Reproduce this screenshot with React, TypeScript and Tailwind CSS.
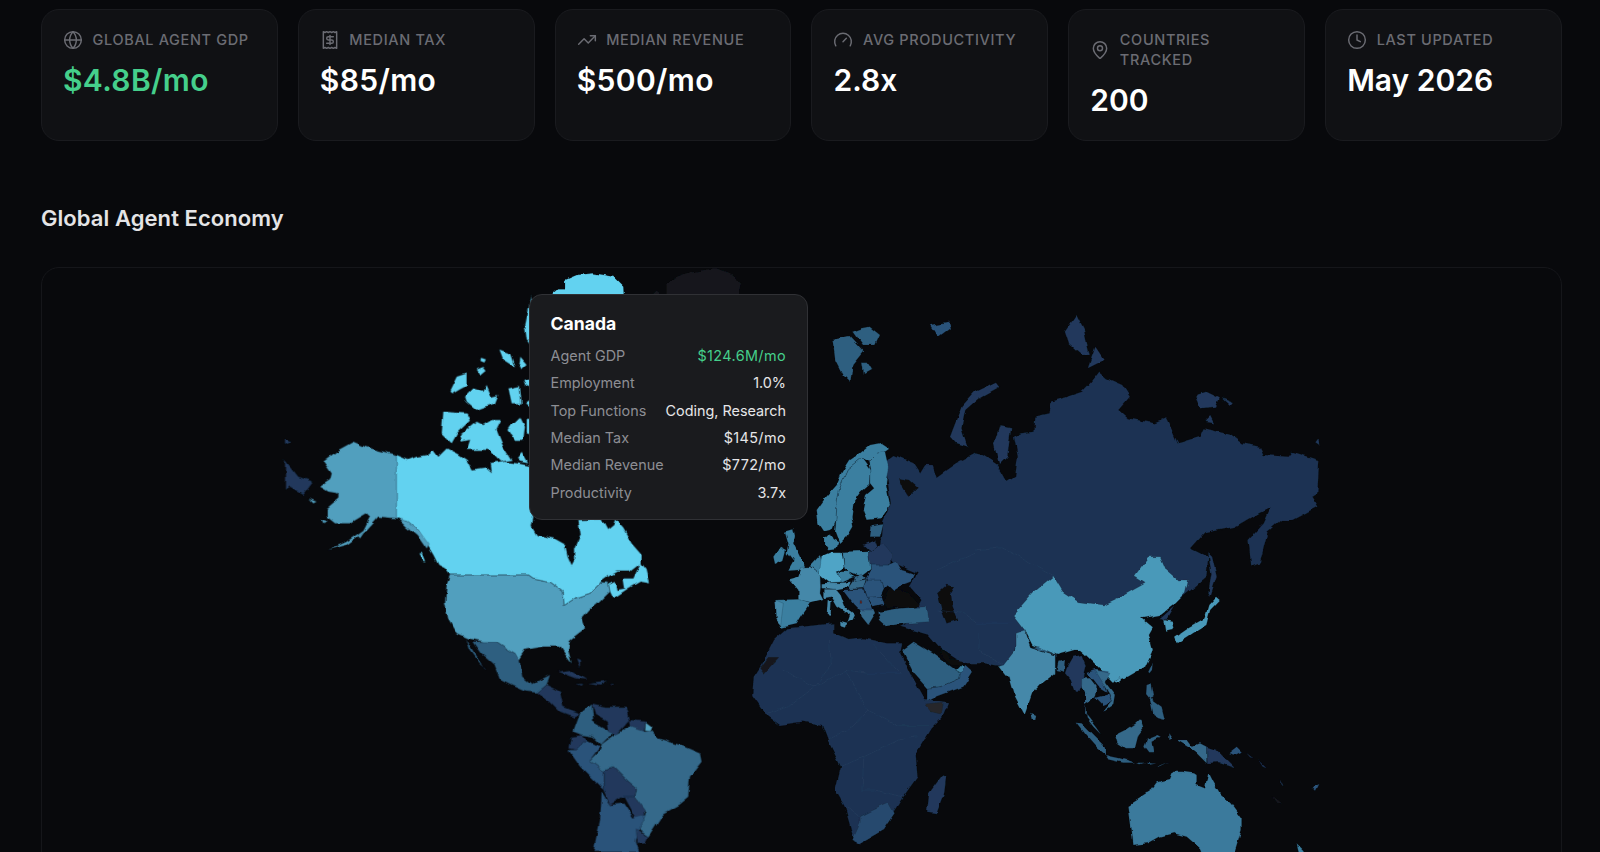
import { Globe, Receipt, TrendingUp, Gauge, MapPin, Clock } from "lucide-react";
import type { ReactNode } from "react";

const font = { fontFamily: "Inter, 'Liberation Sans', sans-serif" };

function Card({ icon, label, value, green, wide }: { icon: ReactNode; label: ReactNode; value: string; green?: boolean; wide?: boolean }) {
  return (
    <div className="h-[132px] rounded-[18px] border border-[#1a1b1f] bg-[#101114] px-[21px] pt-[20px]">
      <div className="flex items-center gap-[9.5px] text-[#6b6c73]">
        {icon}
        <span className="text-[14.5px] leading-[20px] tracking-[0.045em] uppercase font-medium">{label}</span>
      </div>
      <div className={`mt-[10px] text-[30px] leading-[40px] font-semibold ${wide ? "tracking-[0.012em]" : ""} ${green ? "text-[#45cf8b]" : "text-white"}`}>{value}</div>
    </div>
  );
}

function Row({ k, v, green, wide }: { k: string; v: string; green?: boolean; wide?: boolean }) {
  return (
    <div className="flex h-[27.4px] items-center justify-between text-[14.4px]">
      <span className="text-[#8d8e94]">{k}</span>
      <span className={`${wide ? "tracking-[0.028em]" : ""} ${green ? "text-[#45cf8b]" : "text-[#e6e6e8]"}`}>{v}</span>
    </div>
  );
}

const C = {
  ca: "#62d2f0",
  us: "#519fbe",
  de: "#4fa4c6",
  cn: "#4a99b9",
  in: "#4488a9",
  eu: "#3a7fa0",
  au: "#3a7a9c",
  br: "#34698a",
  m1: "#2e5f80",
  m2: "#2a537a",
  za: "#274a6e",
  d1: "#21395c",
  d2: "#1c3253",
  no: "#18191d",
  bg: "#08090c",
};

type Poly = [string, string];

function Polys({ x, y, sx = 0.33333, items }: { x: number; y: number; sx?: number; items: Poly[] }) {
  return (
    <g transform={`translate(${x} ${y}) scale(${sx} 0.33333)`}>
      {items.map(([f, p], i) => (
        <polygon key={i} points={p} fill={f} stroke="#101a28" strokeOpacity={0.4} strokeWidth={1.5} strokeLinejoin="round" />
      ))}
    </g>
  );
}

const z3: Poly[] = [
  [C.no, "500,75 520,55 560,40 650,25 690,40 725,70 715,110 500,110"],
  [C.ca, "158,100 175,85 195,85 195,60 230,45 280,40 340,50 370,80 372,110 158,110"],
  [C.no, "460,102 470,92 482,102"],
];

const z4: Poly[] = [
  [C.d1, "45,600 85,650 130,665 100,705 60,680 45,690"],
  [C.d1, "45,535 65,545 45,555"],
  [C.us, "380,585 320,570 285,560 250,545 205,570 160,605 185,640 180,660 150,680 175,695 205,700 205,715 170,745 170,770 195,790 240,790 290,760 300,770 280,810 230,845 175,870 230,855 290,810 325,770 380,775"],
  [C.us, "115,715 140,725 130,730"],
  [C.us, "155,778 170,782 160,790"],
  [C.us, "262,825 282,818 270,835"],
  [C.ca, "380,585 415,600 440,590 470,585 490,570 505,590 530,565 560,580 590,600 605,628 650,622 665,636 662,612 700,605 745,610 790,620 790,775 785,800 800,825 850,835 885,855 893,890 905,918 915,900 915,865 932,825 925,780 995,778 1012,810 1030,795 1035,778 1060,805 1085,850 1115,885 1115,910 1130,930 1140,970 1110,965 1075,985 1030,1015 1020,995 1015,970 990,970 960,1000 915,1015 882,1037 880,995 840,965 790,955 775,945 540,945 525,925 505,915 490,885 475,860 445,810 415,785 380,775"],
  [C.us, "385,775 415,785 445,810 478,855 470,868 440,825 410,800"],
  [C.bg, "990,968 1015,950 1040,935 1080,935 1110,912 1090,955 1060,955 1065,985 1040,990 1035,965 1015,975"],
  [C.ca, "445,880 455,878 466,905 458,902"],
  [C.ca, "538,395 560,350 590,340 590,375 570,385 545,400"],
  [C.ca, "620,325 640,318 650,330 632,345"],
  [C.ca, "630,290 645,295 640,305 628,300"],
  [C.ca, "585,410 610,385 640,395 650,375 665,410 685,405 675,430 620,450 590,425"],
  [C.ca, "688,268 720,280 735,322 700,300"],
  [C.ca, "748,290 770,315 755,328 745,310"],
  [C.ca, "715,385 750,378 755,430 725,430"],
  [C.ca, "760,360 785,352 785,385 765,378"],
  [C.ca, "765,430 785,415 785,445"],
  [C.ca, "520,455 590,460 600,482 565,515 545,550 515,520"],
  [C.ca, "570,525 620,485 640,495 665,480 695,480 680,510 700,560 725,600 690,605 655,570 590,570 600,540 575,545"],
  [C.ca, "725,495 750,470 765,500 760,540 735,540 715,510"],
  [C.ca, "770,480 785,478 785,525 770,520"],
  [C.ca, "740,595 755,575 775,610 750,605"],
  [C.ca, "785,105 765,200 770,240 785,262"],
];

const z5: Poly[] = [
  [C.us, "150,105 385,105 400,115 450,125 490,155 492,197 525,175 570,160 600,130 625,130 630,155 590,195 570,210 548,235 555,265 510,300 505,330 515,370 500,350 480,320 430,320 375,330 355,360 345,340 320,325 290,305 250,305 205,295 170,280 145,240 135,190 140,130"],
  [C.m1, "198,295 225,340 255,385 262,390 240,370 210,330"],
  [C.m1, "220,305 250,305 290,305 320,325 345,340 360,365 367,410 395,432 420,420 450,405 440,435 412,458 375,455 335,437 300,420 280,370 245,340"],
  [C.d1, "412,458 440,435 480,455 490,500 525,515 540,520 520,530 480,515 450,485"],
  [C.d1, "475,395 510,390 560,420 530,415"],
  [C.d1, "565,432 620,425 600,437"],
  [C.d1, "630,433 640,432 640,437"],
  [C.d1, "530,435 550,435 545,440"],
  [C.d1, "528,355 540,360 540,385"],
  [C.m1, "540,520 575,490 580,545 640,580 605,615 580,590 545,585 520,575"],
  [C.d1, "575,490 620,500 680,500 690,540 650,585 625,575 620,545 585,525"],
  [C.d1, "690,540 740,545 735,575 695,580"],
  [C.us, "740,545 760,560 755,575 738,572"],
  [C.d1, "512,590 545,585 560,600 530,630 505,625"],
  [C.m2, "505,630 530,630 560,600 600,620 570,660 610,690 610,750 580,720 540,680"],
  [C.br, "570,660 600,630 605,615 645,585 690,560 735,575 755,572 775,595 840,615 900,640 905,665 870,710 865,770 835,795 790,820 745,890 715,870 740,820 705,770 710,745 680,720 640,680 610,690"],
  [C.d1, "610,690 640,680 680,720 710,745 705,770 670,770 630,795 610,750"],
  [C.d1, "670,770 705,770 735,810 735,840 705,835"],
  [C.m2, "605,755 630,795 670,790 700,835 740,825 715,870 705,905 715,936 580,936 600,840"],
  [C.d1, "705,870 745,890 735,910 710,912"],
];

const z6: Poly[] = [
  [C.m1, "268,120 310,108 348,155 320,195 315,248 295,225 275,180"],
  [C.m1, "320,95 345,85 365,80 392,105 380,135 345,135"],
  [C.m1, "345,185 360,185 372,208 350,222"],
  [C.m2, "525,75 570,65 575,85 545,110"],
  [C.d1, "875,95 905,45 925,90 940,165 920,165 885,130"],
  [C.d1, "955,140 978,180 935,205"],
  [C.d1, "575,410 605,320 640,275 695,245 705,260 650,295 615,330 605,385 620,440 590,430"],
  [C.d1, "690,430 705,375 735,382 725,470 703,495"],
  [C.d1, "1215,285 1245,275 1280,295 1270,320 1230,325"],
  [C.d1, "1285,295 1318,310 1310,322"],
  [C.d1, "1240,365 1255,348 1265,370"],
  [C.d1, "1530,430 1538,418 1540,438"],
  [C.d2, "405,485 430,465 480,490 497,520 510,495 530,495 540,530 590,490 640,460 660,465 700,495 725,545 745,530 752,470 742,410 760,400 793,395 795,350 835,340 840,305 880,290 920,275 945,245 965,215 985,235 1025,255 1045,290 1015,330 1040,355 1110,370 1140,355 1155,390 1170,430 1230,410 1240,385 1310,405 1340,430 1385,440 1395,465 1460,470 1470,455 1540,480 1535,580 1520,590 1535,620 1470,660 1440,660 1405,695 1385,790 1362,800 1355,720 1395,670 1415,620 1380,640 1350,660 1320,680 1240,700 1205,745 1250,770 1245,830 1195,880 1125,945 770,995 720,1100 660,1090 620,1090 590,1075 550,1045 520,1005 445,980 470,965 500,900 470,860 490,820 430,790 395,740 400,665 420,610"],
  [C.bg, "440,535 470,540 490,560 465,588 450,560"],
  [C.d1, "1250,760 1260,770 1272,830 1255,890 1250,880 1258,820"],
  [C.cn, "740,945 790,880 845,828 870,875 910,905 975,915 1030,885 1085,850 1058,830 1095,770 1125,770 1140,810 1170,840 1198,840 1190,880 1165,910 1125,945 1100,950 1075,955 1105,985 1095,1005 1105,1050 1085,1100 1040,1130 1000,1145 970,1110 925,1060 915,1050 900,1050 855,1065 790,1035 770,990"],
];

const zE: Poly[] = [
  [C.bg, "368,520 385,480 400,470 440,490 480,525 470,530 420,530 380,535"],
  [C.bg, "532,490 560,465 582,470 570,490 575,530 592,570 560,580 545,540"],
  [C.eu, "170,240 195,205 230,165 245,130 270,90 300,70 330,45 365,38 390,55 375,65 350,70 325,95 305,85 262,120 240,170 232,210 228,270 218,295 190,302 175,280"],
  [C.eu, "232,210 240,170 262,120 305,85 330,120 328,165 305,185 280,220 275,260 280,290 262,320 238,345 225,310 228,270"],
  [C.eu, "325,95 350,70 375,65 385,110 378,160 390,225 365,265 320,270 308,240 318,195 342,175 330,160 330,120"],
  [C.eu, "195,325 210,310 218,330 235,340 230,355 205,358 195,345"],
  [C.eu, "75,305 100,298 105,320 100,340 120,380 138,410 120,420 85,422 100,395 80,370 85,340"],
  [C.eu, "40,380 60,350 78,360 70,390 45,402"],
  [C.in, "88,448 115,440 125,412 150,410 180,432 182,470 180,490 190,510 150,520 115,510 115,480"],
  [C.eu, "47,510 115,508 150,520 125,555 110,580 65,590 50,570 50,545"],
  [C.in, "47,510 70,520 62,585 50,570"],
  [C.eu, "150,408 180,375 185,400 178,432"],
  [C.de, "185,378 215,365 245,365 252,412 232,425 245,455 205,458 182,440 178,430"],
  [C.eu, "248,365 325,362 332,420 305,440 270,425 252,412"],
  [C.eu, "232,425 270,425 285,440 245,458"],
  [C.br, "285,440 305,432 318,445 280,455"],
  [C.in, "205,458 245,458 275,455 270,470 230,478 185,475 185,460"],
  [C.br, "270,470 280,455 318,448 310,475 270,478"],
  [C.in, "190,478 230,478 240,490 255,530 285,555 278,570 262,578 270,555 232,530 215,500 190,505"],
  [C.in, "203,510 215,512 212,558 200,555"],
  [C.in, "240,572 262,578 258,590 242,585"],
  [C.m2, "250,480 310,478 320,500 340,540 315,545 300,540 280,520"],
  [C.m2, "310,470 320,450 365,450 372,478 362,500 320,502"],
  [C.m2, "320,502 362,500 370,525 340,532"],
  [C.br, "300,540 340,540 345,552 325,585 305,560"],
  [C.m2, "318,445 332,420 330,405 385,405 410,395 425,420 465,432 455,455 415,470 400,480 385,465 372,478 365,450 320,450"],
  [C.d1, "332,365 370,340 395,370 395,400 385,405 330,405 325,362"],
  [C.d1, "310,345 345,330 352,350 332,365"],
  [C.m1, "335,285 370,280 360,320 330,320"],
  [C.m1, "355,545 420,535 500,530 508,575 440,580 380,588 360,570"],
  ["#5a2a2a", "300,512 308,512 308,520 300,520"],
];

const z7: Poly[] = [
  [C.d2, "115,150 150,115 270,100 270,130 310,150 350,145 410,160 450,160 445,190 475,260 510,330 570,340 555,380 525,415 485,490 490,560 450,625 425,670 400,720 340,760 325,755 300,650 275,600 290,530 255,450 240,405 190,395 130,405 95,375 58,315 62,260 85,220"],
  [C.no, "100,205 125,205 90,250 80,235"],
  ["#26282c", "510,345 555,340 550,372 525,365"],
  [C.za, "340,680 375,660 415,640 430,670 400,720 340,760 320,750 340,700"],
  [C.d1, "520,610 555,555 565,560 560,610 540,670 515,665"],
  [C.m1, "450,180 480,155 530,190 590,240 605,250 600,265 550,290 515,295 480,250"],
  [C.m2, "515,295 550,290 600,265 605,240 615,225 635,245 610,290 540,320 515,335"],
  [C.eu, "590,240 605,222 612,228 605,250"],
  [C.bg, "550,175 575,205 610,210 600,225 580,225 555,195"],
  [C.in, "700,230 715,225 745,180 745,130 770,120 785,170 850,195 850,250 810,285 790,310 770,375 745,320 730,260 720,260"],
  [C.m1, "790,170 810,170 850,195 840,190"],
  [C.br, "785,365 800,375 798,390 788,390"],
  [C.d1, "1125,85 1160,50 1140,90 1130,85"],
  [C.cn, "1135,90 1155,95 1160,120 1140,125"],
  [C.cn, "1163,140 1195,115 1240,85 1250,45 1270,20 1280,30 1255,60 1245,105 1210,130 1170,160"],
];

const zA: Poly[] = [
  [C.m1, "55,65 75,60 72,95 50,90"],
  [C.d1, "80,85 100,50 125,45 137,75 130,105 130,130 118,155 105,155 92,120 75,100"],
  [C.br, "125,115 150,115 170,140 165,165 150,185 135,195 135,160 125,140"],
  [C.m2, "137,100 165,90 205,95 190,125 200,155 175,140 155,115"],
  [C.br, "165,90 210,100 195,125 225,165 220,195 190,215 215,185 205,155"],
  [C.m2, "165,170 205,160 215,185 190,195"],
  [C.br, "135,195 135,220 170,265 182,283 160,260 140,235"],
  [C.m1, "107,248 125,250 165,290 195,320 195,345 170,325 135,285"],
  [C.m1, "195,345 240,355 285,368 250,368 205,358"],
  [C.m1, "290,368 315,368 300,373"],
  [C.m1, "318,365 345,368 325,372"],
  [C.m1, "350,380 385,365 360,378"],
  [C.br, "225,285 255,270 285,250 300,235 310,265 295,285 285,325 255,325 232,310"],
  [C.m1, "318,300 355,285 365,290 335,305 340,340 325,340 310,320"],
  [C.m1, "320,135 335,130 342,165 330,175 365,200 375,240 355,235 340,225 330,180 318,165"],
  [C.m1, "322,95 335,68 333,90 325,100"],
  [C.us, "222,125 240,112 238,130"],
  [C.m1, "385,280 395,295 385,300"],
  [C.br, "410,300 440,300 455,320 480,310 500,320 500,370 470,340 450,325"],
  [C.d1, "500,320 530,330 555,355 585,385 540,370 502,372"],
  [C.m2, "565,340 590,320 605,335 585,345"],
  [C.d2, "620,340 640,355 630,352"],
  [C.d2, "655,360 680,385 668,380"],
  [C.d1, "720,420 730,440 722,438"],
  [C.m2, "815,445 835,435 825,455"],
  [C.no, "700,470 725,490 712,488"],
  [C.au, "265,495 335,450 350,430 390,420 400,395 430,395 462,400 470,405 470,435 495,445 505,395 520,425 540,460 575,490 605,530 605,570 580,650 490,650 480,625 440,590 400,580 360,590 325,610 280,615 275,570"],
  [C.eu, "770,610 790,630 800,650 780,650"],
];

const borders = [
  "140,240 220,290 305,240 360,250 445,250 375,165",
  "260,150 265,225 220,290 150,350 95,375",
  "300,240 360,360 440,410 520,410",
  "255,450 320,410 360,360",
  "290,530 350,500 440,450 490,440",
  "350,500 345,600 375,600 450,620",
  "300,650 340,680",
  "650,130 650,180 715,225",
  "540,60 610,70 645,100 740,100",
  "640,-120 710,-130 790,-80 850,-40",
  "540,-60 640,-110",
];

export default function App() {
  return (
    <div style={font} className="h-screen overflow-hidden bg-[#08090c] pl-[41px] pr-[38px] pt-[9px]">
      <div className="grid grid-cols-6 gap-5">
        <Card icon={<Globe size={20} strokeWidth={1.75} />} label="Global Agent GDP" value="$4.8B/mo" green wide />
        <Card icon={<Receipt size={20} strokeWidth={1.75} />} label="Median Tax" value="$85/mo" wide />
        <Card icon={<TrendingUp size={20} strokeWidth={1.75} />} label="Median Revenue" value="$500/mo" wide />
        <Card icon={<Gauge size={20} strokeWidth={1.75} />} label="Avg Productivity" value="2.8x" />
        <Card icon={<MapPin size={20} strokeWidth={1.75} />} label={<>Countries<br />Tracked</>} value="200" />
        <Card icon={<Clock size={20} strokeWidth={1.75} />} label="Last Updated" value="May 2026" />
      </div>
      <h2 className="mt-[62px] text-[22px] leading-[30px] tracking-[0.003em] font-semibold text-[#e4e4e6]">Global Agent Economy</h2>
      <div className="relative mt-[34px] h-[640px] rounded-[18px] border border-[#15161a] bg-[#08090c]">
        <svg viewBox="42 268 1520 638" width="1520" height="638" className="block">
          <defs>
            <filter id="coast" filterUnits="userSpaceOnUse" x="42" y="268" width="1520" height="638">
              <feTurbulence type="fractalNoise" baseFrequency="0.09" numOctaves="2" seed="4" result="n" />
              <feDisplacementMap in="SourceGraphic" in2="n" scale="5" xChannelSelector="R" yChannelSelector="G" />
              <feGaussianBlur stdDeviation="0.35" />
            </filter>
          </defs>
          <g filter="url(#coast)">
            <Polys x={500} y={260} items={z3} />
            <Polys x={270} y={260} items={z4} />
            <Polys x={400} y={540} items={z5} />
            <Polys x={730} y={300} sx={0.38265} items={z6} />
            <Polys x={730} y={590} sx={0.38265} items={z7} />
            <Polys x={760} y={430} items={zE} />
            <Polys x={1040} y={640} items={zA} />
            <g transform="translate(730 590) scale(0.38265 0.33333)" fill="none" stroke="#2c4463" strokeOpacity={0.7} strokeWidth={1.4}>
              {borders.map((b, i) => (
                <polyline key={i} points={b} />
              ))}
            </g>
          </g>
        </svg>
        <div className="absolute left-[487px] top-[26px] h-[226px] w-[279px] rounded-[13px] border border-[#303135] bg-[#1a1b1e] pl-[20.5px] pr-[21px] pt-[15px]">
          <div className="mb-[4px] text-[17.6px] leading-[28px] font-bold text-white">Canada</div>
          <Row k="Agent GDP" v="$124.6M/mo" green wide />
          <Row k="Employment" v="1.0%" />
          <Row k="Top Functions" v="Coding, Research" />
          <Row k="Median Tax" v="$145/mo" wide />
          <Row k="Median Revenue" v="$772/mo" wide />
          <Row k="Productivity" v="3.7x" />
        </div>
      </div>
    </div>
  );
}
